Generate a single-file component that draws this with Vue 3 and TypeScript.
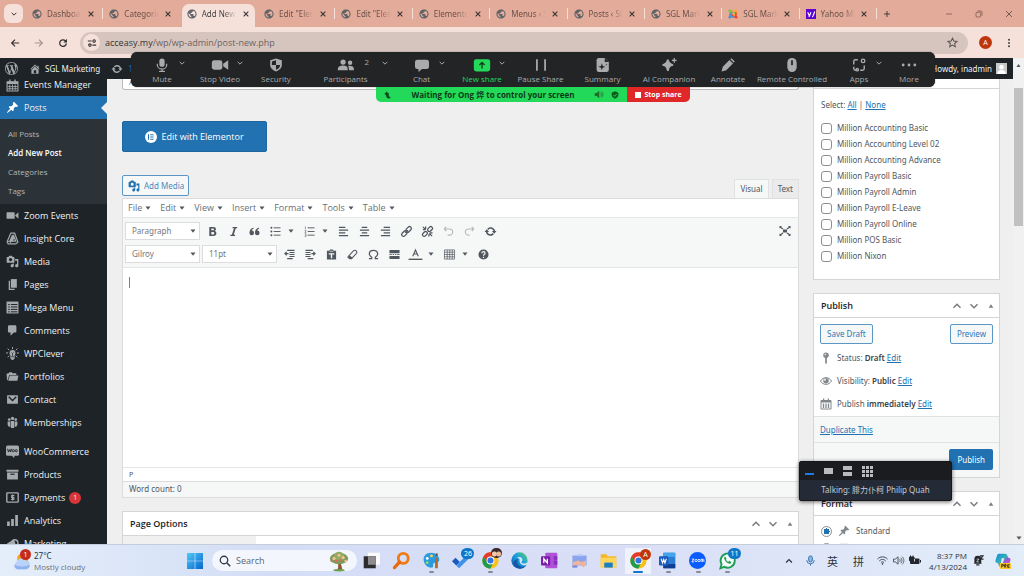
<script setup lang="ts">
import { ref } from 'vue'

const icons: Record<string, string> = {
  globe: '<path d="M12 1C5.9 1 1 5.9 1 12s4.900 11 11 11 11-4.900 11-11S18.100 1 12 1zm-1.500 19.500C6.500 19.800 3.500 16.300 3.500 12c0-.6.1-1.100.2-1.700L8 13.500v1.500c0 1.200 1 2.200 2.500 2.200zM18.500 17.500c-.4-1-1.200-1.600-2.200-1.600h-1v-3c0-.6-.5-1-1-1H8.500v-2.200h2c.6 0 1-.5 1-1V6.500h2c1.200 0 2.200-1 2.200-2.200 2.900 1.300 4.800 4.300 4.800 7.700 0 2.100-.8 4-2 5.500z" fill="#5f6368"/>',
  joomla: '<g fill="none" stroke-width="4" stroke-linecap="round"><path d="M5 15V9c0-4 4-6 7-3l3 3" stroke="#7ac143"/><path d="M10 6l3-1c4-1 7 1 6 5l-4 5" stroke="#f9a541"/><path d="M19 9v6c0 4-4 5-6 3l-4-4" stroke="#f44321"/><path d="M14 18l-3 1c-4 1-7-1-6-5l4-5" stroke="#5091cd"/></g><circle cx="4" cy="4" r="3" fill="#7ac143"/><circle cx="20" cy="4" r="3" fill="#f9a541"/><circle cx="20" cy="20" r="3" fill="#f44321"/><circle cx="4" cy="20" r="3" fill="#5091cd"/>',
  yahoo: '<rect width="24" height="24" fill="#5f01d1"/><path d="M4 8l4 8M12 8L7 19M17 16l4-10" stroke="#fff" stroke-width="2.800" fill="none"/><circle cx="16" cy="18" r="1.700" fill="#fff"/>',
  close: '<path d="M5 5l14 14M19 5L5 19" stroke="#333" stroke-width="3.200"/>',
  chevDown: '<path d="M5 8.500l7 7 7-7" fill="none" stroke="currentColor" stroke-width="3"/>',
  chevUp: '<path d="M5 15.500l7-7 7 7" fill="none" stroke="currentColor" stroke-width="3"/>',
  plus: '<path d="M12 3v18M3 12h18" stroke="#333" stroke-width="2.600"/>',
  min: '<path d="M3 12h18" stroke="#6b4a42" stroke-width="2"/>',
  restore: '<rect x="3" y="7" width="14" height="14" rx="3" fill="none" stroke="#6b4a42" stroke-width="2"/><path d="M7 3h10a4 4 0 0 1 4 4v10" fill="none" stroke="#6b4a42" stroke-width="2"/>',
  winClose: '<path d="M3 3l18 18M21 3L3 21" stroke="#5b423b" stroke-width="2.400"/>',
  back: '<path d="M22 12H4M12 4l-8 8 8 8" fill="none" stroke="currentColor" stroke-width="2.800"/>',
  forward: '<path d="M2 12h18M12 4l8 8-8 8" fill="none" stroke="currentColor" stroke-width="2.600"/>',
  reload: '<path d="M20 13a8 8 0 1 1-2.400-6.500L20 9" fill="none" stroke="#333" stroke-width="3"/><path d="M21.500 2v8.500H13z" fill="#333"/>',
  tune: '<g fill="none" stroke="#333" stroke-width="2.600"><path d="M2 7h9M13 17h9"/><circle cx="17" cy="7" r="3"/><circle cx="7" cy="17" r="3"/></g>',
  star: '<path d="M12 2.500l2.900 6.400 6.900.7-5.200 4.600 1.500 6.900-6.100-3.600-6.100 3.600 1.500-6.900L2.200 9.600l6.900-.7z" fill="none" stroke="#5b5350" stroke-width="2.200"/>',
  kebab: '<g fill="#444"><circle cx="12" cy="4" r="2.400"/><circle cx="12" cy="12" r="2.400"/><circle cx="12" cy="20" r="2.400"/></g>',
  wordpress: '<g transform="scale(1.200)" fill="currentColor"><path d="M20 10c0-5.510-4.490-10-10-10C4.480 0 0 4.490 0 10c0 5.520 4.480 10 10 10 5.510 0 10-4.480 10-10zM7.780 15.370L4.370 6.220c.55-.02 1.170-.08 1.170-.08.5-.06.44-1.130-.06-1.110 0 0-1.450.11-2.370.11-.18 0-.37 0-.58-.01C4.120 2.690 6.870 1.110 10 1.110c2.330 0 4.450.87 6.050 2.340-.68-.11-1.650.39-1.650 1.580 0 .74.45 1.360.9 2.100.35.61.55 1.360.55 2.460 0 1.490-1.400 5-1.400 5l-3.030-8.370c.54-.02.82-.17.82-.17.5-.05.44-1.250-.06-1.220 0 0-1.440.12-2.380.12-.87 0-2.330-.12-2.330-.12-.5-.03-.56 1.200-.06 1.220l.92.08 1.260 3.410zM17.410 10c.24-.64.74-1.870.43-4.250.7 1.290 1.050 2.710 1.050 4.250 0 3.290-1.730 6.240-4.400 7.780.97-2.590 1.940-5.200 2.920-7.780zM6.100 18.090C3.120 16.650 1.110 13.530 1.110 10c0-1.300.23-2.480.72-3.590C3.250 10.300 4.670 14.200 6.100 18.090zm4.030-6.630l2.580 6.980c-.86.29-1.760.45-2.710.45-.79 0-1.570-.11-2.290-.33.81-2.380 1.620-4.740 2.420-7.100z"/></g>',
  home: '<g transform="scale(1.200)" fill="currentColor"><path d="M16 8.500l1.530 1.530-1.060 1.060L10 4.600l-6.470 6.490-1.060-1.060L10 2.500l4 4v-2h2v4zm-6-2.460l6 5.990V18H4v-5.970zM12 17v-5H8v5h4z"/></g>',
  update: '<g transform="scale(1.200)" fill="currentColor"><path d="M10.200 3.280c3.530 0 6.430 2.610 6.920 6h2.080l-3.500 4-3.500-4h2.320c-.45-1.970-2.210-3.450-4.320-3.450-1.450 0-2.730.71-3.540 1.780L4.950 5.660C6.230 4.200 8.110 3.280 10.200 3.280zm-.4 13.440c-3.520 0-6.430-2.610-6.920-6H.8l3.500-4c1.170 1.330 2.330 2.670 3.500 4H5.480c.45 1.970 2.210 3.450 4.320 3.450 1.450 0 2.730-.71 3.540-1.780l1.710 1.950c-1.280 1.460-3.150 2.380-5.250 2.380z"/></g>',
  pin: '<g transform="scale(1.200)" fill="currentColor"><path d="M10.440 3.020l1.820-1.820 6.360 6.350-1.830 1.820c-1.050-.68-2.480-.57-3.410.36l-.75.75c-.92.93-1.040 2.350-.35 3.410l-1.830 1.820-2.410-2.410-2.800 2.790c-.42.42-3.380 2.710-3.800 2.290s1.860-3.390 2.280-3.810l2.790-2.790L4.100 9.360l1.830-1.820c1.050.69 2.480.57 3.400-.36l.75-.75c.93-.92 1.050-2.350.36-3.410z"/></g>',
  media: '<g transform="scale(1.200)" fill="currentColor"><path d="M13 11V4c0-.55-.45-1-1-1h-1.670L9 1H5L3.670 3H2c-.55 0-1 .45-1 1v7c0 .55.45 1 1 1h10c.55 0 1-.45 1-1zM7 4.500c1.380 0 2.500 1.120 2.500 2.500S8.380 9.500 7 9.500 4.500 8.380 4.500 7 5.620 4.500 7 4.500zM14 6h5v10.500c0 1.380-1.120 2.500-2.500 2.500S14 17.880 14 16.500s1.120-2.500 2.500-2.500c.17 0 .34.020.5.050V9h-3V6zm-4 8.050V13h2v3.500c0 1.380-1.120 2.500-2.500 2.500S7 17.880 7 16.500 8.120 14 9.500 14c.17 0 .34.020.5.050z"/></g>',
  comments: '<g transform="scale(1.200)" fill="currentColor"><path d="M5 2h9c1.100 0 2 .9 2 2v7c0 1.100-.9 2-2 2h-2l-5 5v-5H5c-1.100 0-2-.9-2-2V4c0-1.100.9-2 2-2z"/></g>',
  calendar: '<path d="M2 5h20v17H2z" fill="none" stroke="currentColor" stroke-width="2"/><path d="M2 5h20v4H2zM6 1h2.500v5H6zM15.500 1H18v5h-2.500z" fill="currentColor"/><path d="M7 10v11M12 10v11M17 10v11M3 14h18M3 18h18" stroke="currentColor" stroke-width="1.600"/>',
  calendarBars: '<path d="M2 5h20v17H2z" fill="none" stroke="currentColor" stroke-width="2"/><path d="M2 5h20v4H2zM6 1h2.500v5H6zM15.500 1H18v5h-2.500z" fill="currentColor"/><path d="M7 11v9M12 11v9M17 11v9" stroke="currentColor" stroke-width="2.600"/>',
  video: '<rect x="1" y="6" width="15" height="12" rx="1" fill="currentColor"/><path d="M16.500 12L23 6v12z" fill="currentColor"/>',
  insight: '<g fill="none" stroke="currentColor" stroke-width="2.200"><path d="M9 2h7l6 17-4 3H4l-2-4z"/><path d="M12 6L7 17h11l-3-8-4 9M8 20L14 5M4 18l5-2"/></g>',
  pages: '<path d="M9 2h11v16H9z" fill="currentColor"/><path d="M5 5h2.500v15H16v2H5z" fill="currentColor"/>',
  megamenu: '<rect x="1" y="1" width="22" height="22" fill="currentColor"/><path d="M4 6.500h3M9 6.500h12M4 11h3M9 11h12M4 15.500h3M9 15.500h12M4 20h3M9 20h12" stroke="#1d2327" stroke-width="1.800"/>',
  bulb: '<circle cx="12" cy="11" r="5.500" fill="currentColor"/><path d="M9 15h6v6l-3 3-3-3zM12 0v4M3 3l3 3M21 3l-3 3M0 11h4M20 11h4M3 19l3-3M21 19l-3-3" stroke="currentColor" stroke-width="1.800" fill="currentColor"/><path d="M10 10l2 2 2-2M12 12v5M9 18h6" stroke="#1d2327" stroke-width="1.200" fill="none"/>',
  portfolio: '<path d="M2 19L1 7l4-1 1-2h5l1 2h7v3H6L3 19z" fill="currentColor"/><path d="M7 10h16l-2 10H4z" fill="currentColor"/>',
  mail: '<rect x="2" y="4" width="20" height="16" rx="1" fill="currentColor"/><path d="M5 7l7 7 7-7" fill="none" stroke="#1d2327" stroke-width="2.600"/>',
  groups: '<g fill="currentColor"><circle cx="12" cy="4.500" r="3"/><circle cx="6" cy="6.500" r="2.500"/><circle cx="18" cy="6.500" r="2.500"/><path d="M9 9h6v13H9zM3 10h5v10H5l-2-4zM16 10h5v6l-2 4h-3z"/></g>',
  woo: '<rect x="0" y="1" width="24" height="19" rx="3" fill="currentColor"/><path d="M10 19h6l-1 5z" fill="currentColor"/><path d="M3 7l1.500 6L7 8.500 8.500 13 10 7" fill="none" stroke="#1d2327" stroke-width="1.800"/><circle cx="13.500" cy="10.500" r="2" fill="none" stroke="#1d2327" stroke-width="1.700"/><circle cx="19" cy="10.500" r="2" fill="none" stroke="#1d2327" stroke-width="1.700"/>',
  products: '<path d="M1 3h22v4H1zM2 8.500h20V21H2z" fill="currentColor"/><path d="M8 11.500h8" stroke="#1d2327" stroke-width="2"/>',
  payments: '<rect x="1.500" y="3.500" width="21" height="17" rx="1" fill="none" stroke="currentColor" stroke-width="2.600"/><path d="M15.500 8.500h-5v3.500h4v3.500h-5M12 6.500v11" stroke="currentColor" stroke-width="2" fill="none"/>',
  analytics: '<path d="M2 14h5v8H2zM9.500 9h5v13h-5zM17 2h5v20h-5z" fill="currentColor"/>',
  marketing: '<path d="M2 12L15 4l4 14-9-1v5H6v-6H2z" fill="currentColor"/><circle cx="16" cy="11" r="6" fill="none" stroke="currentColor" stroke-width="2.600"/>',
  mic: '<rect x="7.500" y="1" width="9" height="14" rx="4.500" fill="currentColor"/><path d="M4 10v2a8 7 0 0 0 16 0v-2M12 19v4M7 23h10" fill="none" stroke="currentColor" stroke-width="2"/>',
  camera: '<rect x="-2" y="4" width="18" height="16" rx="4" fill="currentColor"/><path d="M17.500 10L26 4v16l-8.500-6z" fill="currentColor"/>',
  shield: '<path d="M12 1l10 3v8c0 6-5 9-10 11C7 21 2 18 2 12V4z" fill="currentColor"/><path d="M12 4v8H5V6zM12 12h7c0 4-3 6.500-7 8z" fill="#222426"/>',
  people: '<g fill="currentColor"><circle cx="7" cy="7" r="4.500"/><circle cx="19" cy="8" r="3.800"/><path d="M-2 21v-2c0-4 3-6 9-6s8 2 8 6v2zM17 21v-2c0-2-.5-4-1.500-5.500 6-.8 10 1.500 10 5V21z"/></g>',
  chat: '<path d="M4 3h16a4 4 0 0 1 4 4v8a4 4 0 0 1-4 4h-8l-6 5v-5H4a4 4 0 0 1-4-4V7a4 4 0 0 1 4-4z" fill="currentColor"/>',
  share: '<rect x="-2" y="2" width="28" height="21" rx="4" fill="#23d959"/><path d="M12 18V8M7.500 12l4.500-4.500L16.500 12" fill="none" stroke="#163d20" stroke-width="2.400"/>',
  pause: '<path d="M5 2v20M19 2v20" stroke="currentColor" stroke-width="3"/>',
  summary: '<path d="M1 4a4 4 0 0 1 4-4h10l7 7v13a4 4 0 0 1-4 4H5a4 4 0 0 1-4-4z" fill="currentColor"/><path d="M15 0v7h7M10 9l1.500 4.500L16 15l-4.500 1.500L10 21l-1.500-4.500L4 15l4.500-1.500zM17 9l.7 1.800L19.500 11.500l-1.800.7L17 14z" fill="#222426"/>',
  sparkle: '<path d="M10 3c1 6 3 8 9 9-6 1-8 3-9 10-1-7-3-9-9-10 6-1 8-3 9-9z" fill="currentColor" stroke="currentColor" stroke-width="3"/><path d="M21 0v8M17 4h8" stroke="currentColor" stroke-width="2.200"/>',
  pencil: '<path d="M1 23l2-8L14.500 3.500l6 6L9 21zM16 2l2-1.500 5.500 5.500L22 8z" fill="currentColor"/>',
  mouse: '<rect x="4" y="0" width="16" height="24" rx="8" fill="currentColor"/><path d="M12 5v6" stroke="#222426" stroke-width="3" stroke-linecap="round"/>',
  apps: '<g fill="none" stroke="currentColor" stroke-width="2.400"><path d="M10 3H6a3 3 0 0 0-3 3v5M3 15v3a3 3 0 0 0 3 3h1M14 21h4a3 3 0 0 0 3-3v-5"/><circle cx="19" cy="5" r="3"/><circle cx="9" cy="20" r="2"/></g>',
  more: '<g fill="currentColor"><circle cx="2" cy="12" r="2.400"/><circle cx="12" cy="12" r="2.400"/><circle cx="22" cy="12" r="2.400"/></g>',
  elementor: '<circle cx="12" cy="12" r="12" fill="#fff"/><path d="M7 6.500v11M10.500 7.500H17M10.500 12H17M10.500 16.500H17" stroke="#2271b1" stroke-width="2.200"/>',
  bold: '<path d="M5 2h9c3.500 0 5.500 1.800 5.500 4.800 0 2-1 3.400-2.700 4.100 2.300.6 3.700 2.400 3.700 5 0 3.700-2.600 6.100-6.500 6.100H5zm4.500 3.500v4H13c1.500 0 2.200-.8 2.200-2s-.7-2-2.200-2zm0 7.500v5.500h3.800c1.600 0 2.500-1.100 2.500-2.700S15 13 13.300 13z" fill="currentColor"/>',
  italic: '<path d="M10 2h10v2.800h-3l-4.500 14.400h3V22H5v-2.800h3.500L13 4.800h-3z" fill="currentColor"/>',
  quote: '<path d="M10 4C4 5 1 9 1 15a5 5 0 1 0 5-5c0-2 2-3.500 4-4zM22 4c-6 1-9 5-9 11a5 5 0 1 0 5-5c0-2 2-3.500 4-4z" fill="currentColor"/>',
  ul: '<path d="M8 4h15M8 12h15M8 20h15" stroke="currentColor" stroke-width="2"/><g fill="currentColor"><circle cx="3" cy="4" r="2.200"/><circle cx="3" cy="12" r="2.200"/><circle cx="3" cy="20" r="2.200"/></g>',
  ol: '<path d="M8 4h15M8 12h15M8 20h15" stroke="currentColor" stroke-width="2"/><path d="M3 1v6M1.500 9.500h3L2 14h3M1.500 17h3v6h-3M2 20h2" stroke="currentColor" stroke-width="1.200" fill="none"/>',
  left: '<path d="M2 3h14M2 9h20M2 15h14M2 21h20" stroke="currentColor" stroke-width="2.400"/>',
  center: '<path d="M6 3h12M2 9h20M6 15h12M2 21h20" stroke="currentColor" stroke-width="2.400"/>',
  right: '<path d="M8 3h14M2 9h20M8 15h14M2 21h20" stroke="currentColor" stroke-width="2.400"/>',
  link: '<g fill="none" stroke="currentColor" stroke-width="2.800"><rect x="9.500" y="3.500" width="14" height="8" rx="4" transform="rotate(-45 16.500 7.500)"/><rect x=".5" y="12.500" width="14" height="8" rx="4" transform="rotate(-45 7.500 16.500)"/><path d="M9 15l6-6"/></g>',
  unlink: '<g fill="none" stroke="currentColor" stroke-width="2.800"><rect x="11.500" y="3" width="12" height="7.500" rx="3.700" transform="rotate(-45 17.500 6.500)"/><rect x=".5" y="13.500" width="12" height="7.500" rx="3.700" transform="rotate(-45 6.500 17.500)"/><path d="M2 2l6 6M2 8h5M8 1v5M16 16l6 6M17 15h6M15 18v5"/></g>',
  undo: '<path d="M7 2L3 6.500 7 11M3 6.500h11c5 0 7 3 7 6.500s-3 7-7 7h-4" fill="none" stroke="currentColor" stroke-width="2.600"/>',
  redo: '<path d="M17 2l4 4.500-4 4.500M21 6.500H10c-5 0-7 3-7 6.500s3 7 7 7h2" fill="none" stroke="currentColor" stroke-width="2.600"/>',
  expand: '<path d="M2 4l6 4M22 4l-6 4M2 20l6-4M22 20l-6-4" stroke="currentColor" stroke-width="2.400"/><path d="M1 2h5l-5 5zM23 2h-5l5 5zM1 22h5l-5-5zM23 22h-5l5-5zM8 9h8v6H8z" fill="currentColor"/>',
  outdent: '<path d="M7 3h16M12 7.500h11M12 12h11M12 16.500h11M7 21h12" stroke="currentColor" stroke-width="2.400"/><path d="M0 10l6-5v3.500h4v3H6V15z" fill="currentColor"/>',
  indent: '<path d="M1 3h16M1 7.500h11M1 12h11M1 16.500h11M6 21h12" stroke="currentColor" stroke-width="2.400"/><path d="M24 10l-6-5v3.500h-4v3h4V15z" fill="currentColor"/>',
  paste: '<path d="M2 4h5l2-3h6l2 3h5v19H2z" fill="currentColor"/><path d="M6 10.500h12M12 10v10" stroke="#f6f7f7" stroke-width="3"/><path d="M8 5h8" stroke="#f6f7f7" stroke-width="1.500"/>',
  eraser: '<path d="M3 16L14 4c2-2 4-2 6 0s2 4 0 6L10 21H6l-4-3z" fill="none" stroke="currentColor" stroke-width="2.200"/><path d="M3 17l3 4h4l2-2-6-5z" fill="currentColor"/>',
  omega: '<path d="M2 21h6v-3C4 15.500 3 13 3 10.500 3 6 7 3 12 3s9 3 9 7.500c0 2.500-1 5-5 7.500v3h6" fill="none" stroke="currentColor" stroke-width="2.800"/>',
  readmore: '<path d="M1 2h22v7H1zM1 15h22v7H1z" fill="currentColor"/><path d="M1 12h5M8 12h3M13 12h3M18 12h5" stroke="currentColor" stroke-width="2"/>',
  color: '<path d="M6 16l6-14 6 14M8 11h8" fill="none" stroke="currentColor" stroke-width="2.400"/><path d="M-3 22.500h30" stroke="currentColor" stroke-width="3"/>',
  table: '<path d="M1 2h22v20H1zM1 7h22M1 12h22M1 17h22M7 2v20M12.500 2v20M18 2v20" fill="none" stroke="currentColor" stroke-width="1.500"/>',
  help: '<circle cx="12" cy="12" r="11" fill="currentColor"/><path d="M8.500 9c0-4.500 7-4 7 0 0 2.500-3.500 2.500-3.500 5.500M12 17v2.500" fill="none" stroke="#f6f7f7" stroke-width="2.600"/>',
  key: '<circle cx="12" cy="6.500" r="5.500" fill="currentColor"/><path d="M12 10v13" stroke="currentColor" stroke-width="3.500"/><circle cx="10.500" cy="5" r="1.500" fill="#fff"/>',
  eye: '<path d="M1 12c5-9 17-9 22 0-5 9-17 9-22 0z" fill="none" stroke="currentColor" stroke-width="2"/><circle cx="12" cy="11.500" r="5.500" fill="currentColor"/><circle cx="10" cy="9.500" r="1.800" fill="#fff"/>',
  picture: '<rect x="3" y="3" width="18" height="18" fill="#dcdcde"/>',
  weather: '<circle cx="13" cy="9" r="7.500" fill="#f5a21b"/><path d="M6 23a5.500 5.500 0 0 1 0-10.500c1-5 9-5.500 11-1 6-1 8 9 1 11.500z" fill="#b9d2fa"/><path d="M6 23a5 5 0 0 1-4-6c5 3 15 3 20 0 1 3-1 5-4 6z" fill="#8fb2ef"/>',
  windows: '<defs><linearGradient id="win" x1="0" y1="0" x2="1" y2="1"><stop offset="0" stop-color="#4fc9f7"/><stop offset="1" stop-color="#0565cf"/></linearGradient></defs><path d="M0 0h11.500v11.500H0zM12.500 0H24v11.500H12.500zM0 12.500h11.500V24H0zM12.500 12.500H24V24H12.500z" fill="url(#win)"/>',
  search: '<circle cx="10" cy="10" r="7.500" fill="none" stroke="#333b45" stroke-width="2.600"/><path d="M15.500 15.500l7 7" stroke="#333b45" stroke-width="3"/>',
  tree: '<path d="M11 14h3l2 8-1 2h-6l2-4z" fill="#8a5a35"/><ellipse cx="12" cy="9" rx="11" ry="7" fill="#7d9c58"/><ellipse cx="12" cy="6" rx="6" ry="5" fill="#93ab61"/><g fill="#f2c19a"><circle cx="6" cy="9" r="2"/><circle cx="17" cy="8" r="2"/><circle cx="12" cy="5" r="1.800"/><circle cx="20" cy="12" r="1.600"/></g><g fill="#e2695d"><circle cx="9" cy="12" r="1.500"/><circle cx="14" cy="11" r="1.400"/><circle cx="3" cy="12" r="1.300"/></g><ellipse cx="12" cy="23" rx="7" ry="1.500" fill="#6aa04a"/>',
  taskview: '<rect x="7" y="1" width="17" height="17" fill="#fbfbfb"/><rect x="1" y="6" width="17" height="17" fill="#2c2c2e"/><rect x="7" y="6" width="11" height="12" fill="#8e8e90"/>',
  orangeSearch: '<circle cx="14.500" cy="9" r="7" fill="none" stroke="#f07a13" stroke-width="4"/><path d="M9.500 14L2 22" stroke="#e9690c" stroke-width="4.500" stroke-linecap="round"/>',
  paint: '<path d="M12 1C4 1 0 6 1 12s6 11 12 10c3-1 0-4 2-6s8 0 8-5c0-6-5-10-11-10z" fill="#2b9be0"/><circle cx="6" cy="9" r="2" fill="#fff"/><circle cx="12" cy="5.500" r="2" fill="#ffd54a"/><circle cx="6" cy="15" r="2" fill="#8be06b"/><path d="M18 7l3 2v14h-4V9z" fill="#b46a2b"/><path d="M17 5h4l-1-4z" fill="#57402c"/>',
  todo: '<path d="M0 13l5-5 6 6-5 5z" fill="#185abd"/><path d="M6 19L21 4l4 4L10 23z" fill="#3f92ea"/>',
  chrome: '<circle cx="12" cy="12" r="11.500" fill="#fbc116"/><path d="M12 .5A11.500 11.500 0 0 1 22 6.500H12L7 14 2 6.500A11.500 11.500 0 0 1 12 .5z" fill="#e33b2e"/><path d="M2 6.200A11.500 11.500 0 0 0 11.500 23.500L16.500 14.500 7.500 14z" fill="#229a4b"/><circle cx="12" cy="12" r="5.600" fill="#fff"/><circle cx="12" cy="12" r="4.300" fill="#2f74e0"/>',
  edge: '<defs><linearGradient id="edg" x1="0" y1="1" x2="1" y2="0"><stop offset="0" stop-color="#0c59a4"/><stop offset=".55" stop-color="#1c9fdf"/><stop offset="1" stop-color="#5ad45f"/></linearGradient></defs><circle cx="12" cy="12" r="11.500" fill="url(#edg)"/><path d="M10 10c-3 4-1 10 5 11 3 .5 5-1 7-3-3 6-10 7-15 4-6-4-4-11 3-12z" fill="#1657a6"/><path d="M12 12c1-2-1-4-4-4 5-2 9 0 8 4-.5 2-2 1.500-1 3 2 2 6 2 8.500-1l-1.500 4c-4 2-10 0-10-6z" fill="#d9e6f8"/>',
  onenote: '<rect x="6" y="1" width="17" height="22" rx="1.500" fill="#b052d8"/><path d="M18 6h5v5h-5zM18 12h5v6h-5z" fill="#8a2cc0"/><rect x="0" y="6" width="13" height="13" rx="1.500" fill="#7a1fa6"/><path d="M4 15.500v-6l5 6v-6" fill="none" stroke="#fff" stroke-width="1.800"/>',
  remote: '<path d="M2 5h20v14H2z" fill="#8ba4ee"/><path d="M9 3h7v3H9z" fill="#b8c8fa"/><path d="M3 14l7-2 5 2 6-2v7l-4 3-3-4-6 1-3 3H2z" fill="#f0b49a"/><path d="M2 19h7v3H2z" fill="#6f8be6"/>',
  folder: '<path d="M1 3h8l2 3h12v16H1z" fill="#f4b62b"/><path d="M1 8h22v14H1z" fill="#ffd659"/><path d="M6 15h12v7H6z" fill="#1a7dc9"/>',
  word: '<rect x="6" y="1" width="17" height="22" rx="1.500" fill="#2b7cd3"/><path d="M6 1h17v6H6z" fill="#41a5ee"/><path d="M6 17h17v6H6z" fill="#103f91"/><rect x="0" y="6" width="13" height="13" rx="1.500" fill="#185abd"/><path d="M3 9.500l2 6 1.700-5 1.700 5 2-6" fill="none" stroke="#fff" stroke-width="1.500"/>',
  zoomApp: '<circle cx="12" cy="12" r="12" fill="#0b5cff"/><path d="M4 10h3l-3 4h3M17 14v-4M19 14v-3.500M21 14v-3.500M17 10.300h3.500" stroke="#fff" stroke-width="1.200" fill="none"/><circle cx="10" cy="12" r="1.600" fill="none" stroke="#fff" stroke-width="1.200"/><circle cx="14" cy="12" r="1.600" fill="none" stroke="#fff" stroke-width="1.200"/>',
  whatsapp: '<path d="M2 23l1.600-5.800A10 10 0 1 1 7.500 21z" fill="#f2fbf5" stroke="#1d9c55" stroke-width="2.600"/><path d="M8.500 6.500c-2 1-1.500 4 1 6.800s6 4.200 7.500 2.200l.3-1.500-3-1.500-1.300 1.500c-1.500-.6-2.600-1.700-3.300-3.200L10.800 9.500z" fill="#1d9c55"/>',
  trayMic: '<rect x="8" y="2" width="8" height="13" rx="4" fill="#8dbbe8" stroke="#2d6cab" stroke-width="2"/><path d="M4 11v1a8 7 0 0 0 16 0v-1M12 19v4" fill="none" stroke="#2d6cab" stroke-width="2"/>',
  wifi: '<path d="M1 9c6-6.500 16-6.500 22 0M5 13c4-4.500 10-4.500 14 0M8.500 16.500c2-2 5-2 7 0" fill="none" stroke="#333b45" stroke-width="2"/><circle cx="12" cy="19.500" r="1.800" fill="#333b45"/>',
  sound: '<path d="M1 9h4l6-5v16l-6-5H1z" fill="none" stroke="#333b45" stroke-width="1.800"/><path d="M14 8.500c2 2 2 5 0 7M17 6c3.500 3.500 3.500 8.500 0 12M20 3.500c5 5 5 12 0 17" fill="none" stroke="#333b45" stroke-width="1.600"/>',
  battery: '<rect x="2" y="7" width="19" height="11" rx="2" fill="#22272e"/><path d="M22 10h2v5h-2z" fill="#22272e"/><path d="M1 4h9v7c0 3-9 3-9 0zM3 1v4M8 1v4" fill="#22272e" stroke="#22272e" stroke-width="2"/><path d="M11 8v5" stroke="#fff" stroke-width="1.500"/>',
  bell: '<path d="M3 18V9a7 7 0 0 1 15 0v9l2 1H1zM7 20h7v3H7z" fill="#22272e"/><path d="M15 2h7l-6 7h7" fill="none" stroke="#22272e" stroke-width="2.400"/><path d="M8 9h5l-5 6h5" fill="none" stroke="#e2ebf8" stroke-width="1.500"/>',
  copilot: '<defs><linearGradient id="cop" x1="0" y1="0" x2="1" y2="1"><stop offset="0" stop-color="#1b7fe8"/><stop offset=".45" stop-color="#31b6b0"/><stop offset=".6" stop-color="#9a57e0"/><stop offset="1" stop-color="#f0608f"/></linearGradient></defs><path d="M7 1h8c2 0 3 1 4 4l1 2c3 0 4 2 3 5l-2 6c-1 3-2 3-4 3H9c-2 0-3-1-4-4l-1-2c-3 0-4-2-3-5l2-6c1-3 2-3 4-3z" fill="url(#cop)"/><path d="M10 8h4l-2 7H9z" fill="#e2ebf8"/><rect x="7" y="15" width="17" height="9" rx="1" fill="#ffc926"/><path d="M10 22v-5h2.500v2.500H10M14.500 22v-5h2v2.500h-2l2.500 2.500M22 17.500h-3v4h3M19 19.500h2.500" fill="none" stroke="#222" stroke-width="1.200"/>',
  leaf: '<path d="M1 9l8-8 1 4c6 0 5 3 4 6 0 4 2 7 7 9-7 5-15 2-15-8z" fill="#0d4a1d"/>',
  speaker: '<path d="M2 8h5l7-6v20l-7-6H2z" fill="#1f6b2c"/><path d="M17 7c3 3 3 7 0 10M20 4c5 5 5 11 0 16" fill="none" stroke="#1f6b2c" stroke-width="2"/>',
  check: '<path d="M12 1l10 4v7c0 6-5 9-10 11C7 21 2 18 2 12V5z" fill="#0d5a1d"/><path d="M7 12l4 4 6-7" fill="none" stroke="#23d959" stroke-width="2.600"/>',
  avatar: '<rect width="24" height="24" fill="#c9c9cb"/><circle cx="12" cy="9" r="5" fill="#fff"/><path d="M3 24c0-7 4-9 9-9s9 2 9 9z" fill="#fff"/>',
  caretUp: '<path d="M5 17h14l-7-10z" fill="currentColor"/>',
  caretDown: '<path d="M2 6h20L12 19z" fill="currentColor"/>',
}

interface Tab { icon: string; title: string; active?: boolean }
const tabs: Tab[] = [
  { icon: 'globe', title: 'Dashboard' }, { icon: 'globe', title: 'Categories' },
  { icon: 'globe', title: 'Add New Post', active: true }, { icon: 'globe', title: 'Edit "Elementor' },
  { icon: 'globe', title: 'Edit "Elementor' }, { icon: 'globe', title: 'Elementor' },
  { icon: 'globe', title: 'Menus ‹ SGL' }, { icon: 'globe', title: 'Posts ‹ SGL' },
  { icon: 'globe', title: 'SGL Marketing' }, { icon: 'joomla', title: 'SGL Marketing' },
  { icon: 'yahoo', title: 'Yahoo Mail' },
]
const submenu = ['All Posts', 'Add New Post', 'Categories', 'Tags']
const menu = [
  ['video', 'Zoom Events'], ['insight', 'Insight Core'], ['media', 'Media'], ['pages', 'Pages'],
  ['megamenu', 'Mega Menu'], ['comments', 'Comments'], ['bulb', 'WPClever'],
  ['portfolio', 'Portfolios'], ['mail', 'Contact'], ['groups', 'Memberships'],
]
const shopMenu = [
  ['woo', 'WooCommerce'], ['products', 'Products'], ['payments', 'Payments'],
  ['analytics', 'Analytics'], ['marketing', 'Marketing'],
]
const zoomItems: { icon: string; label: string; chevron?: boolean; count?: string; share?: boolean }[] = [
  { icon: 'mic', label: 'Mute', chevron: true }, { icon: 'camera', label: 'Stop Video', chevron: true },
  { icon: 'shield', label: 'Security' }, { icon: 'people', label: 'Participants', chevron: true, count: '2' },
  { icon: 'chat', label: 'Chat', chevron: true }, { icon: 'share', label: 'New share', chevron: true, share: true },
  { icon: 'pause', label: 'Pause Share' }, { icon: 'summary', label: 'Summary' },
  { icon: 'sparkle', label: 'AI Companion' }, { icon: 'pencil', label: 'Annotate' },
  { icon: 'mouse', label: 'Remote Controlled' }, { icon: 'apps', label: 'Apps', chevron: true },
  { icon: 'more', label: 'More' },
]
const editorMenus = ['File', 'Edit', 'View', 'Insert', 'Format', 'Tools', 'Table']
interface Tool { icon: string; label: string; split?: boolean; faded?: boolean }
const toolsTop: Tool[] = [
  { icon: 'bold', label: 'Bold' }, { icon: 'italic', label: 'Italic' }, { icon: 'quote', label: 'Blockquote' },
  { icon: 'ul', label: 'Bulleted list', split: true }, { icon: 'ol', label: 'Numbered list', split: true },
  { icon: 'left', label: 'Align left' }, { icon: 'center', label: 'Align center' }, { icon: 'right', label: 'Align right' },
  { icon: 'link', label: 'Insert link' }, { icon: 'unlink', label: 'Remove link' },
  { icon: 'undo', label: 'Undo', faded: true }, { icon: 'redo', label: 'Redo', faded: true },
  { icon: 'update', label: 'Replace' },
]
const toolsBottom: Tool[] = [
  { icon: 'outdent', label: 'Decrease indent' }, { icon: 'indent', label: 'Increase indent' },
  { icon: 'paste', label: 'Paste as text' }, { icon: 'eraser', label: 'Clear formatting' },
  { icon: 'omega', label: 'Special character' }, { icon: 'readmore', label: 'Read more' },
  { icon: 'color', label: 'Text color', split: true }, { icon: 'table', label: 'Table', split: true },
  { icon: 'help', label: 'Keyboard shortcuts' },
]
const products = [
  'Million Accounting Basic', 'Million Accounting Level 02', 'Million Accounting Advance',
  'Million Payroll Basic', 'Million Payroll Admin', 'Million Payroll E-Leave',
  'Million Payroll Online', 'Million POS Basic', 'Million Nixon',
]
const picked = ref<string[]>([])
const publishRows = [
  { icon: 'key', label: 'Status:', value: 'Draft' },
  { icon: 'eye', label: 'Visibility:', value: 'Public' },
  { icon: 'calendarBars', label: 'Publish', value: 'immediately' },
]
const boxActions = [['chevUp', 'Move up'], ['chevDown', 'Move down'], ['caretUp', 'Toggle panel']]
const apps: { icon: string; label: string; badge?: string; kind?: string; running?: boolean; active?: boolean }[] = [
  { icon: 'taskview', label: 'Task view' }, { icon: 'orangeSearch', label: 'Everything' },
  { icon: 'paint', label: 'Paint', running: true }, { icon: 'todo', label: 'To Do', badge: '26', kind: 'blue' },
  { icon: 'chrome', label: 'Chrome', kind: 'photo', badge: ' ', running: true }, { icon: 'edge', label: 'Edge' },
  { icon: 'onenote', label: 'OneNote' }, { icon: 'remote', label: 'Remote assistance' },
  { icon: 'folder', label: 'File Explorer' },
  { icon: 'chrome', label: 'Chrome work', badge: 'A', kind: 'red', active: true },
  { icon: 'word', label: 'Word', running: true }, { icon: 'zoomApp', label: 'Zoom', running: true },
  { icon: 'whatsapp', label: 'WhatsApp', badge: '11', kind: 'blue', running: true },
]
const format = ref('standard')
</script>

<template>
  <div class="desktop">
    <header class="tabstrip">
      <button class="tab-search" aria-label="Search tabs"><svg class="i8" viewBox="0 0 24 24" v-html="icons.chevDown" /></button>
      <div class="tabs">
        <div v-for="(tab, i) in tabs" :key="i" class="tab" :class="{ active: tab.active, plain: i === 1 }">
          <svg class="i10" viewBox="0 0 24 24" v-html="icons[tab.icon]" />
          <span class="tab-title">{{ tab.title }}</span>
          <button aria-label="Close tab"><svg class="i8" viewBox="0 0 24 24" v-html="icons.close" /></button>
        </div>
      </div>
      <button class="new-tab" aria-label="New tab"><svg class="i8" viewBox="0 0 24 24" v-html="icons.plus" /></button>
      <div class="window-buttons">
        <button aria-label="Minimize"><svg class="i8" viewBox="0 0 24 24" v-html="icons.min" /></button>
        <button aria-label="Restore"><svg class="i8" viewBox="0 0 24 24" v-html="icons.restore" /></button>
        <button aria-label="Close window"><svg class="i8" viewBox="0 0 24 24" v-html="icons.winClose" /></button>
      </div>
    </header>

    <div class="navbar">
      <button aria-label="Back"><svg class="i10" viewBox="0 0 24 24" v-html="icons.back" /></button>
      <button class="dim" aria-label="Forward"><svg class="i10" viewBox="0 0 24 24" v-html="icons.forward" /></button>
      <button aria-label="Reload"><svg class="i10" viewBox="0 0 24 24" v-html="icons.reload" /></button>
      <div class="omnibox">
        <span class="site-info"><svg class="i10" viewBox="0 0 24 24" v-html="icons.tune" /></span>
        <span class="url"><b>acceasy.my</b>/wp/wp-admin/post-new.php</span>
        <button aria-label="Bookmark"><svg class="i11" viewBox="0 0 24 24" v-html="icons.star" /></button>
      </div>
      <span class="profile">A</span>
      <button aria-label="Browser menu"><svg class="i10" viewBox="0 0 24 24" v-html="icons.kebab" /></button>
    </div>

    <div class="viewport">
      <div class="wp">
        <div class="adminbar">
          <svg class="i13" viewBox="0 0 24 24" v-html="icons.wordpress" />
          <svg class="i12 site" viewBox="0 0 24 24" v-html="icons.home" />
          <a href="#">SGL Marketing</a>
          <svg class="i12 upd" viewBox="0 0 24 24" v-html="icons.update" />
          <span>1</span>
          <a href="#" class="howdy">Howdy, inadmin</a>
          <svg class="i11" viewBox="0 0 24 24" v-html="icons.avatar" />
        </div>
        <div class="body">
          <nav class="sidebar">
            <a href="#" class="item first"><svg class="i13" viewBox="0 0 24 24" v-html="icons.calendar" />Events Manager</a>
            <a href="#" class="item current"><svg class="i13" viewBox="0 0 24 24" v-html="icons.pin" />Posts</a>
            <div class="submenu">
              <a v-for="s in submenu" :key="s" href="#" :class="{ on: s === 'Add New Post' }">{{ s }}</a>
            </div>
            <a v-for="m in menu" :key="m[1]" href="#" class="item"><svg class="i13" viewBox="0 0 24 24" v-html="icons[m[0]]" />{{ m[1] }}</a>
            <div class="sep"></div>
            <a v-for="m in shopMenu" :key="m[1]" href="#" class="item">
              <svg class="i13" viewBox="0 0 24 24" v-html="icons[m[0]]" />{{ m[1] }}<span v-if="m[1] === 'Payments'" class="bubble">1</span>
            </a>
          </nav>

          <main class="content">
            <section class="primary">
              <input class="title" aria-label="Title" placeholder="Add title">
              <button class="elementor"><svg class="i12" viewBox="0 0 24 24" v-html="icons.elementor" />Edit with Elementor</button>
              <div class="editor-head">
                <button class="outline add-media"><svg class="i12" viewBox="0 0 24 24" v-html="icons.media" />Add Media</button>
                <div class="modes">
                  <button class="mode on">Visual</button>
                  <button class="mode">Text</button>
                </div>
              </div>
              <div class="editor">
                <div class="menubar">
                  <button v-for="m in editorMenus" :key="m">{{ m }}<svg class="i6" viewBox="0 0 24 24" v-html="icons.caretDown" /></button>
                </div>
                <div class="tools">
                  <div class="tool-row">
                    <span class="pick"><select aria-label="Block format"><option>Paragraph</option></select><svg class="i6" viewBox="0 0 24 24" v-html="icons.caretDown" /></span>
                    <template v-for="t in toolsTop" :key="t.icon">
                      <button class="tool" :class="{ faded: t.faded }" :aria-label="t.label"><svg :class="t.icon === 'update' ? 'i13' : 'i11'" viewBox="0 0 24 24" v-html="icons[t.icon]" /></button>
                      <button v-if="t.split" class="split" :aria-label="t.label + ' options'"><svg class="i6" viewBox="0 0 24 24" v-html="icons.caretDown" /></button>
                    </template>
                    <button class="tool full" aria-label="Fullscreen"><svg class="i12" viewBox="0 0 24 24" v-html="icons.expand" /></button>
                  </div>
                  <div class="tool-row">
                    <span class="pick"><select aria-label="Font family"><option>Gilroy</option></select><svg class="i6" viewBox="0 0 24 24" v-html="icons.caretDown" /></span>
                    <span class="pick"><select aria-label="Font size"><option>11pt</option></select><svg class="i6" viewBox="0 0 24 24" v-html="icons.caretDown" /></span>
                    <template v-for="t in toolsBottom" :key="t.icon">
                      <button class="tool" :aria-label="t.label"><svg class="i11" viewBox="0 0 24 24" v-html="icons[t.icon]" /></button>
                      <button v-if="t.split" class="split" :aria-label="t.label + ' options'"><svg class="i6" viewBox="0 0 24 24" v-html="icons.caretDown" /></button>
                    </template>
                  </div>
                </div>
                <div class="canvas" contenteditable="true" role="textbox" aria-label="Post content"><span class="caret"></span></div>
                <div class="path">P</div>
                <div class="count">Word count: 0</div>
              </div>
              <div class="box">
                <h2>Page Options
                  <button v-for="a in boxActions" :key="a[0]" :aria-label="a[1]"><svg :class="a[0] === 'caretUp' ? 'i8' : 'i12'" viewBox="0 0 24 24" v-html="icons[a[0]]" /></button>
                </h2>
                <div class="options"></div>
              </div>
            </section>

            <aside class="secondary">
              <div class="box products">
                <h2></h2>
                <p>Select: <a href="#">All</a> | <a href="#">None</a></p>
                <label v-for="p in products" :key="p"><input v-model="picked" type="checkbox" :value="p">{{ p }}</label>
              </div>

              <div class="box publish">
                <h2>Publish
                  <button v-for="a in boxActions" :key="a[0]" :aria-label="a[1]"><svg :class="a[0] === 'caretUp' ? 'i8' : 'i12'" viewBox="0 0 24 24" v-html="icons[a[0]]" /></button>
                </h2>
                <div class="between"><button class="outline">Save Draft</button><button class="outline">Preview</button></div>
                <div v-for="r in publishRows" :key="r.label" class="row">
                  <svg class="i12" viewBox="0 0 24 24" v-html="icons[r.icon]" />
                  <span>{{ r.label }} <b>{{ r.value }}</b> <a href="#">Edit</a></span>
                </div>
                <div class="duplicate"><a href="#">Duplicate This</a></div>
                <div class="submit"><button class="solid">Publish</button></div>
              </div>

              <div class="box format">
                <h2>Format
                  <button v-for="a in boxActions" :key="a[0]" :aria-label="a[1]"><svg :class="a[0] === 'caretUp' ? 'i8' : 'i12'" viewBox="0 0 24 24" v-html="icons[a[0]]" /></button>
                </h2>
                <label><input v-model="format" type="radio" name="format" value="standard"><svg class="i12" viewBox="0 0 24 24" v-html="icons.pin" />Standard</label>
                <label><input v-model="format" type="radio" name="format" value="image"><svg class="i12" viewBox="0 0 24 24" v-html="icons.picture" />Image</label>
              </div>
            </aside>
          </main>
        </div>
      </div>
      <div class="scrollbar">
        <svg class="i7" viewBox="0 0 24 24" v-html="icons.caretUp" />
        <div class="thumb"></div>
        <svg class="i6 last" viewBox="0 0 24 24" v-html="icons.caretDown" />
      </div>
    </div>

    <footer class="taskbar">
      <div class="weather">
        <span class="weather-icon"><svg class="i18" viewBox="0 0 24 24" v-html="icons.weather" /><span class="badge red">1</span></span>
        <span>27°C<br><small>Mostly cloudy</small></span>
      </div>
      <button class="start" aria-label="Start"><svg class="i16" viewBox="0 0 24 24" v-html="icons.windows" /></button>
      <label class="search"><svg class="i12" viewBox="0 0 24 24" v-html="icons.search" /><input aria-label="Search" placeholder="Search"><svg class="i20" viewBox="0 0 24 24" v-html="icons.tree" /></label>
      <div class="apps">
        <button v-for="a in apps" :key="a.label" :class="{ running: a.running, active: a.active }" :aria-label="a.label">
          <svg class="i17" viewBox="0 0 24 24" v-html="icons[a.icon]" />
          <span v-if="a.badge" class="badge" :class="a.kind">{{ a.badge }}</span>
        </button>
      </div>
      <div class="tray">
        <svg class="i10" viewBox="0 0 24 24" v-html="icons.chevUp" />
        <svg class="i11 tray-mic" viewBox="0 0 24 24" v-html="icons.trayMic" />
        <span class="ime">英</span><span class="ime second">拼</span>
        <svg class="i11" viewBox="0 0 24 24" v-html="icons.wifi" />
        <svg class="i11" viewBox="0 0 24 24" v-html="icons.sound" />
        <svg class="i12" viewBox="0 0 24 24" v-html="icons.battery" />
        <time>8:37 PM<br>4/13/2024</time>
        <svg class="i11" viewBox="0 0 24 24" v-html="icons.bell" />
        <svg class="i16" viewBox="0 0 24 24" v-html="icons.copilot" />
      </div>
    </footer>

    <div class="meeting">
      <button v-for="z in zoomItems" :key="z.label" :class="{ share: z.share }">
        <span class="glyph">
          <svg class="i14" viewBox="0 0 24 24" v-html="icons[z.icon]" />
          <span class="extra"><span v-if="z.count" class="people-count">{{ z.count }}</span><svg v-if="z.chevron" class="i8" viewBox="0 0 24 24" v-html="icons.chevDown" /></span>
        </span>
        {{ z.label }}
      </button>
    </div>
    <div class="sharing">
      <div class="waiting">
        <svg class="i8" viewBox="0 0 24 24" v-html="icons.leaf" />
        <span>Waiting for Ong 烨 to control your screen</span>
        <svg class="i9" viewBox="0 0 24 24" v-html="icons.speaker" />
        <svg class="i8" viewBox="0 0 24 24" v-html="icons.check" />
      </div>
      <button class="stop"><i></i>Stop share</button>
    </div>
    <div class="talking">
      <div class="views"><i class="v-min"></i><i class="v-one"></i><i class="v-two"></i><i class="v-grid"></i></div>
      <p>Talking: 腓力仆柯 Philip Quah</p>
    </div>
  </div>
</template>

<style>
html, body { margin: 0; overflow: hidden; }
</style>

<style scoped>
.desktop { position: relative; display: flex; flex-direction: column; height: 100vh; overflow: hidden; font: 8px/12px "Noto Sans", "Open Sans", "Noto Sans CJK SC", sans-serif; color: #50575e; background: #efefef; }
.desktop * { box-sizing: border-box; }
button, input, select { font: inherit; color: inherit; background: none; border: 0; padding: 0; margin: 0; }
svg { display: block; flex: none; overflow: visible; }
button { display: flex; align-items: center; justify-content: center; white-space: nowrap; }
p, h2 { margin: 0; }
.i6 { width: 6px; height: 6px; }
.i7 { width: 7px; height: 7px; } .i8 { width: 8px; height: 8px; } .i9 { width: 9px; height: 9px; }
.i10 { width: 10px; height: 10px; } .i11 { width: 11px; height: 11px; } .i12 { width: 12px; height: 12px; }
.i13 { width: 13px; height: 13px; } .i14 { width: 14px; height: 14px; } .i16 { width: 16px; height: 16px; } .i17 { width: 17px; height: 17px; }
.i18 { width: 18px; height: 18px; } .i20 { width: 20px; height: 20px; }

.tabstrip { flex: none; display: flex; align-items: center; height: 27px; background: #e3ab99; }
.tab-search { width: 19px; height: 19px; margin: 0 4px; border-radius: 6px; background: #f6e0da; color: #333; }
.tabs { flex: 1; max-width: 851px; display: flex; align-self: stretch; padding-top: 4px; }
.tab { flex: 1; min-width: 0; display: flex; align-items: center; gap: 5px; margin-right: 4px; padding: 0 5px 4px; position: relative; color: #6a514b; }
.tab::after { content: ""; position: absolute; right: -3px; top: 4px; width: 1px; height: 11px; background: #f6e0da; }
.tab.active::after, .tab.plain::after { display: none; }
.tab.active { background: #f6e0da; border-radius: 7px 7px 0 0; color: #444; }
.tab-title { flex: 1; overflow: hidden; white-space: nowrap; mask-image: linear-gradient(90deg, #000 65%, transparent); }
.tab button { width: 9px; }
.new-tab { width: 18px; }
.window-buttons { margin-left: auto; display: flex; }
.window-buttons button { width: 30px; }

.navbar { flex: none; display: flex; align-items: center; height: 31px; padding: 0 10px; background: #f6e0da; color: #333; }
.navbar > button { width: 10px; margin-right: 14px; }
.navbar > .dim { color: #a4928d; }
.navbar > button:last-child { margin: 0 0 0 12px; }
.omnibox { flex: 1; display: flex; align-items: center; height: 22px; margin: 0 11px 0 -2px; padding: 0 10px 0 3px; border-radius: 11px; background: #d6c5bf; }
.site-info { display: grid; place-items: center; width: 17px; height: 17px; border-radius: 50%; background: #f6e0da; }
.url { flex: 1; margin-left: 5px; font-family: "Open Sans", sans-serif; font-size: 9px; color: #6d625f; }
.url b { font-weight: 400; color: #333; }
.profile { width: 13px; height: 13px; border-radius: 50%; background: #bf360c; color: #fff; font-size: 7px; line-height: 13px; text-align: center; }

.viewport { flex: 1; min-height: 0; display: flex; }
.wp { flex: 1; min-width: 0; display: flex; flex-direction: column; overflow: hidden; }
.adminbar { flex: none; display: flex; align-items: center; height: 21px; padding: 0 6px 0 5px; background: #1d2327; color: #a7aaad; }
.adminbar a { color: #f0f0f1; text-decoration: none; }
.adminbar .site { margin: 0 4px 0 11px; }
.adminbar .upd { margin: 0 5px 0 11px; }
.adminbar span { color: #2271b1; }
.adminbar .howdy { margin: 0 4px 0 auto; }
.body { flex: 1; min-height: 0; display: flex; }

.sidebar { flex: none; width: 107px; background: #1d2327; color: #a7aaad; font-family: "Open Sans", sans-serif; font-size: 9px; }
.item { display: flex; align-items: center; gap: 5px; height: 23px; padding-left: 6px; color: #a7aaad; text-decoration: none; position: relative; -webkit-text-fill-color: #f0f0f1; white-space: nowrap; }
.item.first { height: 17px; padding-bottom: 5px; }
.item.current { background: #2271b1; color: #fff; }
.item.current::after { content: ""; position: absolute; right: 0; top: 6px; border: 6px solid transparent; border-right-color: #efefef; border-left: 0; }
.submenu { padding: 5px 8px 4px; background: #2c3338; font-size: 8px; }
.submenu a { display: block; line-height: 19px; color: #b1b5b9; text-decoration: none; }
.submenu .on { color: #fff; font-weight: 600; }
.sep { height: 6px; }
.bubble { width: 12px; height: 12px; margin-left: -1px; border-radius: 50%; background: #d63638; font-size: 7px; line-height: 12px; text-align: center; }

.content { flex: 1; min-width: 0; display: flex; gap: 14px; padding: 0 13px 0 15px; }
.primary { flex: 1; min-width: 0; }
.secondary { width: 187px; flex: none; }
.title { display: block; width: 100%; height: 11px; padding: 0 6px 5px; border: 1px solid #b9bbbe; border-top: 0; border-radius: 0 0 3px 3px; background: #fff; font-size: 9px; line-height: 5px; }
.elementor { gap: 4px; width: 145px; height: 31px; margin-top: 31px; border: 1px solid #1d66a0; border-radius: 2px; background: #2271b1; color: #fff; font-family: "Open Sans", sans-serif; font-size: 9px; }
.editor-head { display: flex; justify-content: space-between; margin-top: 23px; height: 23px; }
.outline { height: 20px; padding: 0 6px; border: 1px solid #5b97c6; border-radius: 2px; background: #f6f7f7; color: #2f78b5; }
.add-media { gap: 4px; padding: 0 4px 0 5px; height: 21px; color: #4e8abf; }
.add-media svg { color: #2271b1; }
.modes { display: flex; gap: 3px; padding-top: 4px; }
.mode { padding: 0 5px; border: 1px solid #e0e1e2; border-bottom: 0; background: #ebebeb; }
.mode.on { background: #f6f7f7; }
.editor { border: 1px solid #dcdcde; background: #fff; }
.menubar { display: flex; height: 19px; padding-left: 5px; gap: 9px; border-bottom: 1px solid #e4e5e6; font-family: "Open Sans", sans-serif; font-size: 9px; color: #6a7076; }
.menubar button { gap: 3px; }
.menubar svg, .pick svg, .split { color: #50575e; }
.tools { display: grid; gap: 5px; padding: 4px 3px 4px 2px; background: #f6f7f7; border-bottom: 1px solid #e4e5e6; }
.tool-row { display: flex; height: 18px; color: #50575e; }
.pick { position: relative; display: flex; width: 75px; margin-right: 2px; }
.pick select { appearance: none; width: 100%; padding: 0 6px; border: 1px solid #dcdcde; background: #fff; color: #72777c; }
.pick svg { position: absolute; right: 4px; top: 6px; }
.tool { width: 21px; }
.split { width: 13px; padding-right: 3px; }
.faded { color: #b5b9bc; }
.full { margin-left: auto; }
.canvas { height: 199px; padding: 9px 6px; outline: 0; }
.caret { display: block; width: 1px; height: 11px; background: #7b8086; }
.path { height: 14px; padding: 0 6px; border-top: 1px solid #e4e5e6; line-height: 14px; font-size: 7px; }
.count { height: 16px; padding: 0 6px; border-top: 1px solid #dcdcde; background: #f6f7f7; line-height: 14px; }
.box { border: 1px solid #d3d5d7; background: #fff; }
.primary .box { margin-top: 13px; }
h2 { display: flex; align-items: center; gap: 5px; height: 24px; padding: 0 4px 0 7px; border-bottom: 1px solid #d3d5d7; font-family: "Open Sans", sans-serif; font-size: 9px; font-weight: 600; color: #1d2327; }
h2 button { color: #787c82; }
h2 button:first-of-type { margin-left: auto; }
h2 button:last-of-type { margin-left: 2px; }
.options { height: 60px; width: 133px; background: #f0f0f0; }

.secondary a { color: #2271b1; }
.secondary .box { margin-bottom: 13px; }
.products { border-top: 0; padding-bottom: 15px; }
.products h2 { height: 10px; }
.products p { padding: 10px 7px 9px; }
.products label { display: flex; align-items: center; gap: 5px; height: 16px; padding-left: 7px; }
.products input { appearance: none; width: 11px; height: 11px; border: 1px solid #8c8f94; border-radius: 3px; background: #fff; }
.between { display: flex; justify-content: space-between; padding: 6px 6px 2px; }
.row { display: flex; align-items: center; gap: 5px; height: 23px; padding-left: 6px; }
.row svg { color: #82878c; }
.row b { font-weight: 600; color: #3c434a; }
.duplicate { display: flex; align-items: center; height: 26px; margin-top: 1px; padding-left: 6px; border-top: 1px solid #e0e1e2; background: #f6f7f7; }
.submit { display: flex; justify-content: flex-end; padding: 6px 6px 7px; border-top: 1px solid #e0e1e2; background: #f6f7f7; }
.solid { height: 21px; padding: 0 8px; border-radius: 2px; background: #2271b1; color: #fff; }
.format { height: 90px; }
.format label { display: flex; align-items: center; gap: 6px; padding: 9px 7px 0; }
.format label + label { padding-top: 5px; }
.format label svg { color: #82878c; }
.format input { appearance: none; width: 11px; height: 11px; border: 1px solid #8c8f94; border-radius: 50%; }
.format input:checked { background: radial-gradient(circle, #2271b1 0 3px, #fff 3px); }

.scrollbar { flex: none; display: flex; flex-direction: column; align-items: center; width: 11px; padding: 4px 0 3px; background: #f1f1f1; color: #50575e; }
.thumb { width: 9px; height: 138px; margin-top: 19px; background: #c1c1c1; }
.last { margin-top: auto; }

.taskbar { flex: none; display: flex; align-items: center; height: 32px; border-top: 1px solid #c4cddb; background: linear-gradient(90deg, #e4eefa, #d3def6 26%, #dadff6 62%, #e2edf9); color: #2c333c; }
.weather { display: flex; align-items: center; gap: 3px; width: 187px; padding-left: 13px; line-height: 11px; }
.weather small { font-family: "Open Sans", sans-serif; font-size: 8px; color: #69717b; }
.weather-icon { position: relative; }
.badge { position: absolute; min-width: 11px; height: 11px; border-radius: 6px; font-size: 7px; line-height: 11px; text-align: center; color: #fff; }
.badge.red { background: #c42b1c; right: 0; top: -3px; }
.badge.blue { background: #0f76c9; min-width: 13px; padding: 0 2px; right: 1px; top: 3px; }
.badge.photo { background: radial-gradient(circle at 30% 60%, #f0c7a8 0 2px, transparent 3px), radial-gradient(circle at 70% 60%, #e9bb98 0 2px, transparent 3px), #3b2a28; right: 3px; top: 3px; height: 10px; }
.search { display: flex; align-items: center; width: 145px; height: 21px; margin-left: 9px; padding: 0 8px 0 7px; border-radius: 11px; background: #f3f7fd; font-family: "Open Sans", sans-serif; font-size: 9px; }
.search input { flex: 1; min-width: 0; padding-left: 5px; outline: 0; }
.search input::placeholder { color: #5c636d; opacity: 1; }
.title::placeholder { color: #8c8f94; opacity: 1; }
.apps { display: flex; width: 385px; align-self: stretch; }
.apps button { position: relative; flex: 1; }
.apps .running::after, .apps .active::after { content: ""; position: absolute; left: 50%; bottom: 3px; width: 5px; height: 2px; margin-left: -2px; border-radius: 1px; background: #858b97; }
.apps .active::after { width: 10px; margin-left: -5px; background: #0f76c9; }
.apps .active { background: linear-gradient(#eff2fb, #eff2fb) center / 26px 26px no-repeat; }
.apps .badge.red { right: 2px; top: 4px; background: #bf360c; }
.tray { display: flex; align-items: center; margin-left: auto; padding-right: 13px; gap: 5px; }
.tray-mic { margin: 0 6px; }
.ime { font: 11px/14px "Noto Sans CJK SC", sans-serif; }
.ime.second { margin: 0 8px 0 10px; }
.tray time { margin: 0 1px 0 3px; text-align: right; line-height: 11px; font-family: "Open Sans", sans-serif; }
.tray > .i16 { margin-left: 6px; }

.meeting { position: absolute; left: 131px; right: 89px; top: 52px; display: grid; grid-template-columns: 62fr 54fr 58fr 81fr 71fr 50fr 67fr 57fr 76fr 42fr 86fr 48fr 52fr; height: 35px; border-radius: 6px; background: #222426; color: #a9abad; box-shadow: 0 0 1px #111; font-family: "Open Sans", sans-serif; }
.meeting button { flex-direction: column; justify-content: flex-start; min-width: 0; padding-top: 6px; gap: 1px; }
.glyph { display: grid; grid-template-columns: 1fr auto 1fr; align-items: center; align-self: stretch; }
.glyph > svg { grid-column: 2; grid-row: 1; }
.extra { grid-column: 3; grid-row: 1; display: flex; gap: 12px; height: 14px; width: 0; padding-left: 9px; }
.extra svg { margin-top: 1px; }
.people-count { margin-left: -3px; padding-left: 6px; line-height: 8px; }
.meeting .share { color: #23d959; }
.meeting .share .extra { color: #a9abad; }
.sharing { position: absolute; left: 376px; top: 87px; display: flex; height: 15px; font-family: "Open Sans", "Noto Sans CJK SC", sans-serif; }
.waiting { display: flex; align-items: center; gap: 8px; width: 251px; padding: 0 8px; border-radius: 0 0 0 5px; background: #23d959; color: #0e3a1a; font-weight: 700; white-space: nowrap; }
.waiting span { flex: 1; text-align: center; }
.stop { gap: 3px; width: 63px; border-radius: 0 0 5px 0; background: #e02828; color: #fff; font-size: 7px; font-weight: 700; }
.stop i { width: 6px; height: 6px; background: #fff; }
.talking { position: absolute; left: 799px; top: 461px; width: 153px; border: 1px solid #15171a; border-radius: 2px; background: #242b36; box-shadow: 0 1px 4px #0009; color: #c5cad1; }
.views { display: flex; align-items: center; gap: 10px; height: 18px; padding-left: 5px; background: #1b1c1f; }
.views i { width: 9px; height: 7px; }
.v-min { border-bottom: 2px solid #1f7ae8; }
.v-one { background: #b9bbbe; }
.views .v-one { height: 6px; }
.v-two { border: solid #b9bbbe; border-width: 4px 0; }
.views .v-two { height: 10px; }
.views .v-grid { width: 11px; height: 11px; background: repeating-linear-gradient(90deg, transparent 0 3px, #1b1c1f 3px 4px), repeating-linear-gradient(#b9bbbe 0 3px, #1b1c1f 3px 4px); }
.talking p { line-height: 20px; text-align: center; }
</style>
